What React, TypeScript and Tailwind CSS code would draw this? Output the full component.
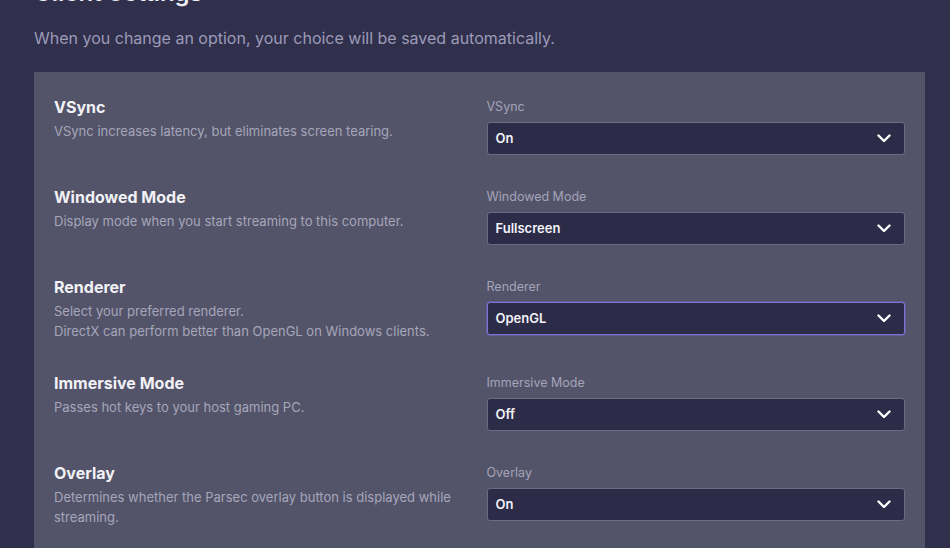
import React from "react";

interface Setting {
  title: string;
  desc: string[];
  label: string;
  value: string;
  focused?: boolean;
}

const settings: Setting[] = [
  { title: "VSync", desc: ["VSync increases latency, but eliminates screen tearing."], label: "VSync", value: "On" },
  { title: "Windowed Mode", desc: ["Display mode when you start streaming to this computer."], label: "Windowed Mode", value: "Fullscreen" },
  {
    title: "Renderer",
    desc: ["Select your preferred renderer.", "DirectX can perform better than OpenGL on Windows clients."],
    label: "Renderer",
    value: "OpenGL",
    focused: true,
  },
  { title: "Immersive Mode", desc: ["Passes hot keys to your host gaming PC."], label: "Immersive Mode", value: "Off" },
  {
    title: "Overlay",
    desc: ["Determines whether the Parsec overlay button is displayed while streaming."],
    label: "Overlay",
    value: "On",
  },
];

function Chevron() {
  return (
    <svg width="14" height="9" viewBox="0 0 14 9" fill="none">
      <path d="M1.5 1.5 L7 7 L12.5 1.5" stroke="#ffffff" strokeWidth="2.4" strokeLinecap="round" strokeLinejoin="round" />
    </svg>
  );
}

function SettingRow({ s }: { s: Setting }) {
  return (
    <div className="grid grid-cols-2 gap-x-[14px] items-start">
      <div>
        <div className="text-[16px] leading-6 font-bold text-[#f1f1f6]">{s.title}</div>
        <div className="mt-0.5 text-[13px] leading-5 text-[#a6a6ba]">
          {s.desc.map((d) => (
            <div key={d}>{d}</div>
          ))}
        </div>
      </div>
      <div>
        <div className="text-[12.5px] leading-6 text-[#a4a3b8]">{s.label}</div>
        <button
          className={
            "mt-[3px] w-full h-[33px] flex items-center justify-between pl-2 pr-[13px] rounded-[3px] bg-[#2c2b48] border " +
            (s.focused ? "border-[#7d72da] shadow-[0_0_0_1px_rgba(125,114,218,0.35)]" : "border-[#6c6b83]")
          }
        >
          <span className="text-[13px] font-semibold text-[#f3f3f8]">{s.value}</span>
          <Chevron />
        </button>
      </div>
    </div>
  );
}

export default function App() {
  return (
    <div
      className="w-[950px] h-[548px] overflow-hidden bg-[#302f4c] px-[34px]"
      style={{ fontFamily: "Inter, 'Noto Sans', sans-serif" }}
    >
      <h1 className="-mt-[19px] text-[24px] leading-[24px] font-semibold text-[#ececf4]">Client Settings</h1>
      <p className="mt-[21px] text-[16px] leading-6 text-[#9c9bb8]">
        When you change an option, your choice will be saved automatically.
      </p>
      <div className="mt-[22px] w-[891px] bg-[#535469] px-5 pt-[23px] pb-8 flex flex-col gap-[30px]">
        {settings.map((s) => (
          <SettingRow key={s.title} s={s} />
        ))}
      </div>
    </div>
  );
}
